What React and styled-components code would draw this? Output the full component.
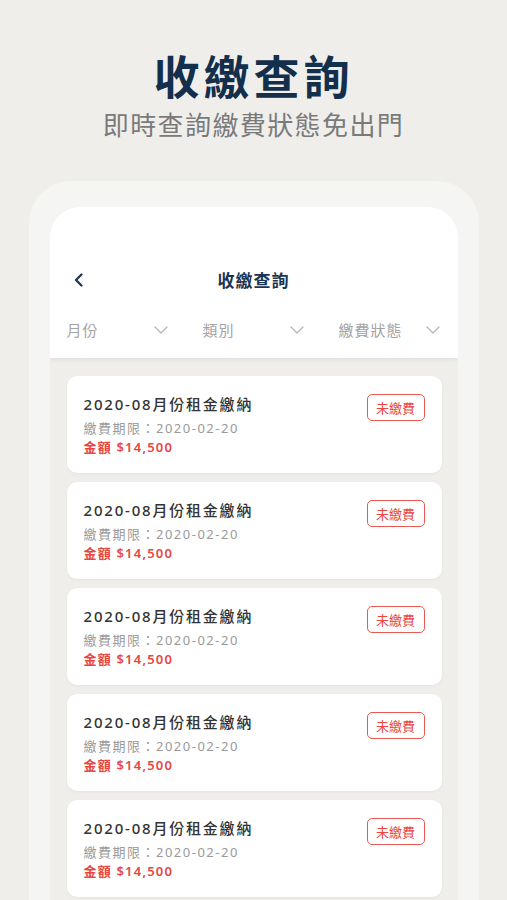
import React from "react";
import styled, { createGlobalStyle } from "styled-components";

const GlobalStyle = createGlobalStyle`
  html, body {
    margin: 0;
    padding: 0;
    background: #efeeeb;
    font-family: "Noto Sans", "Noto Sans CJK TC", sans-serif;
  }
`;

const Page = styled.div`
  width: 507px;
  height: 900px;
  overflow: hidden;
  background: #efeeeb;
  display: flex;
  flex-direction: column;
  align-items: center;
`;

const Hero = styled.h1`
  margin: 44px 0 0;
  font-size: 46px;
  line-height: 60px;
  font-weight: 700;
  letter-spacing: 4px;
  color: #132f4c;
  font-family: "Noto Sans CJK TC", sans-serif;
`;

const Tagline = styled.p`
  margin: 2px 0 0;
  font-size: 26px;
  line-height: 36px;
  letter-spacing: 1.4px;
  color: #7a7a7a;
  font-family: "Noto Sans CJK TC", sans-serif;
`;

const Frame = styled.div`
  margin-top: 39px;
  width: 450px;
  flex: 1;
  box-sizing: border-box;
  padding: 26px 21px 0;
  background: #f5f5f3;
  border-radius: 42px 42px 0 0;
  display: flex;
`;

const Screen = styled.div`
  flex: 1;
  background: #efeeeb;
  border-radius: 30px 30px 0 0;
  overflow: hidden;
  display: flex;
  flex-direction: column;
`;

const Header = styled.div`
  background: #fff;
  padding-top: 51px;
  box-shadow: 0 2px 4px rgba(0, 0, 0, 0.06);
  position: relative;
  z-index: 1;
`;

const Nav = styled.div`
  height: 43px;
  display: flex;
  align-items: center;
  justify-content: center;
  position: relative;
`;

const Back = styled.button`
  position: absolute;
  left: 22px;
  top: 12px;
  width: 14px;
  height: 20px;
  padding: 0;
  border: none;
  background: none;
  display: flex;
  align-items: center;
  justify-content: center;
`;

const NavTitle = styled.div`
  font-size: 17px;
  font-weight: 700;
  color: #1a3452;
  letter-spacing: 1px;
  font-family: "Noto Sans CJK TC", sans-serif;
`;

const Filters = styled.div`
  height: 57px;
  display: grid;
  grid-template-columns: repeat(3, 1fr);
`;

const Filter = styled.div`
  display: flex;
  align-items: center;
  justify-content: space-between;
  padding: 0 18px 0 17px;
  font-size: 15px;
  color: #a3a3a3;
  letter-spacing: 1px;
  font-family: "Noto Sans CJK TC", sans-serif;
`;

const List = styled.div`
  padding: 18px 16px 0 17px;
  display: flex;
  flex-direction: column;
  gap: 9px;
`;

const Card = styled.div`
  height: 97px;
  box-sizing: border-box;
  background: #fff;
  border-radius: 10px;
  padding: 16px 17px 0;
  display: flex;
  justify-content: space-between;
  align-items: flex-start;
  box-shadow: 0 1px 3px rgba(0, 0, 0, 0.05);
`;

const Info = styled.div`
  display: flex;
  flex-direction: column;
`;

const CardTitle = styled.div`
  font-size: 15px;
  line-height: 24px;
  font-weight: 500;
  color: #333;
  letter-spacing: 1.8px;
  font-family: "Noto Sans", "Noto Sans CJK TC", sans-serif;
`;

const Due = styled.div`
  margin-top: 3px;
  font-size: 13px;
  line-height: 18px;
  color: #9a9a9a;
  letter-spacing: 1.5px;
  font-family: "Noto Sans", "Noto Sans CJK TC", sans-serif;
`;

const Amount = styled.div`
  margin-top: 1px;
  font-size: 13px;
  line-height: 18px;
  font-weight: 600;
  color: #e8463f;
  letter-spacing: 1.2px;
  font-family: "Noto Sans", "Noto Sans CJK TC", sans-serif;
`;

const Badge = styled.div`
  margin-top: 2px;
  width: 58px;
  height: 27px;
  box-sizing: border-box;
  border: 1px solid #ea5a52;
  border-radius: 5px;
  display: flex;
  align-items: center;
  justify-content: center;
  font-size: 13px;
  color: #e8463f;
  font-family: "Noto Sans CJK TC", sans-serif;
`;

const Chevron = () => (
  <svg width="14" height="8" viewBox="0 0 14 8" fill="none">
    <path d="M1 1l6 6 6-6" stroke="#b5b5b5" strokeWidth="1.3" strokeLinecap="round" strokeLinejoin="round" />
  </svg>
);

const bills = [1, 2, 3, 4, 5].map((id) => ({
  id,
  title: "2020-08月份租金繳納",
  due: "繳費期限：2020-02-20",
  amount: "金額 $14,500",
  status: "未繳費",
}));

export default function App() {
  return (
    <Page>
      <GlobalStyle />
      <Hero>收繳查詢</Hero>
      <Tagline>即時查詢繳費狀態免出門</Tagline>
      <Frame>
        <Screen>
          <Header>
            <Nav>
              <Back aria-label="back">
                <svg width="9" height="14" viewBox="0 0 9 14" fill="none">
                  <path d="M7.5 1.5L2 7l5.5 5.5" stroke="#1a3452" strokeWidth="2.2" strokeLinecap="round" strokeLinejoin="round" />
                </svg>
              </Back>
              <NavTitle>收繳查詢</NavTitle>
            </Nav>
            <Filters>
              {["月份", "類別", "繳費狀態"].map((f) => (
                <Filter key={f}>
                  <span>{f}</span>
                  <Chevron />
                </Filter>
              ))}
            </Filters>
          </Header>
          <List>
            {bills.map((b) => (
              <Card key={b.id}>
                <Info>
                  <CardTitle>{b.title}</CardTitle>
                  <Due>{b.due}</Due>
                  <Amount>{b.amount}</Amount>
                </Info>
                <Badge>{b.status}</Badge>
              </Card>
            ))}
          </List>
        </Screen>
      </Frame>
    </Page>
  );
}
